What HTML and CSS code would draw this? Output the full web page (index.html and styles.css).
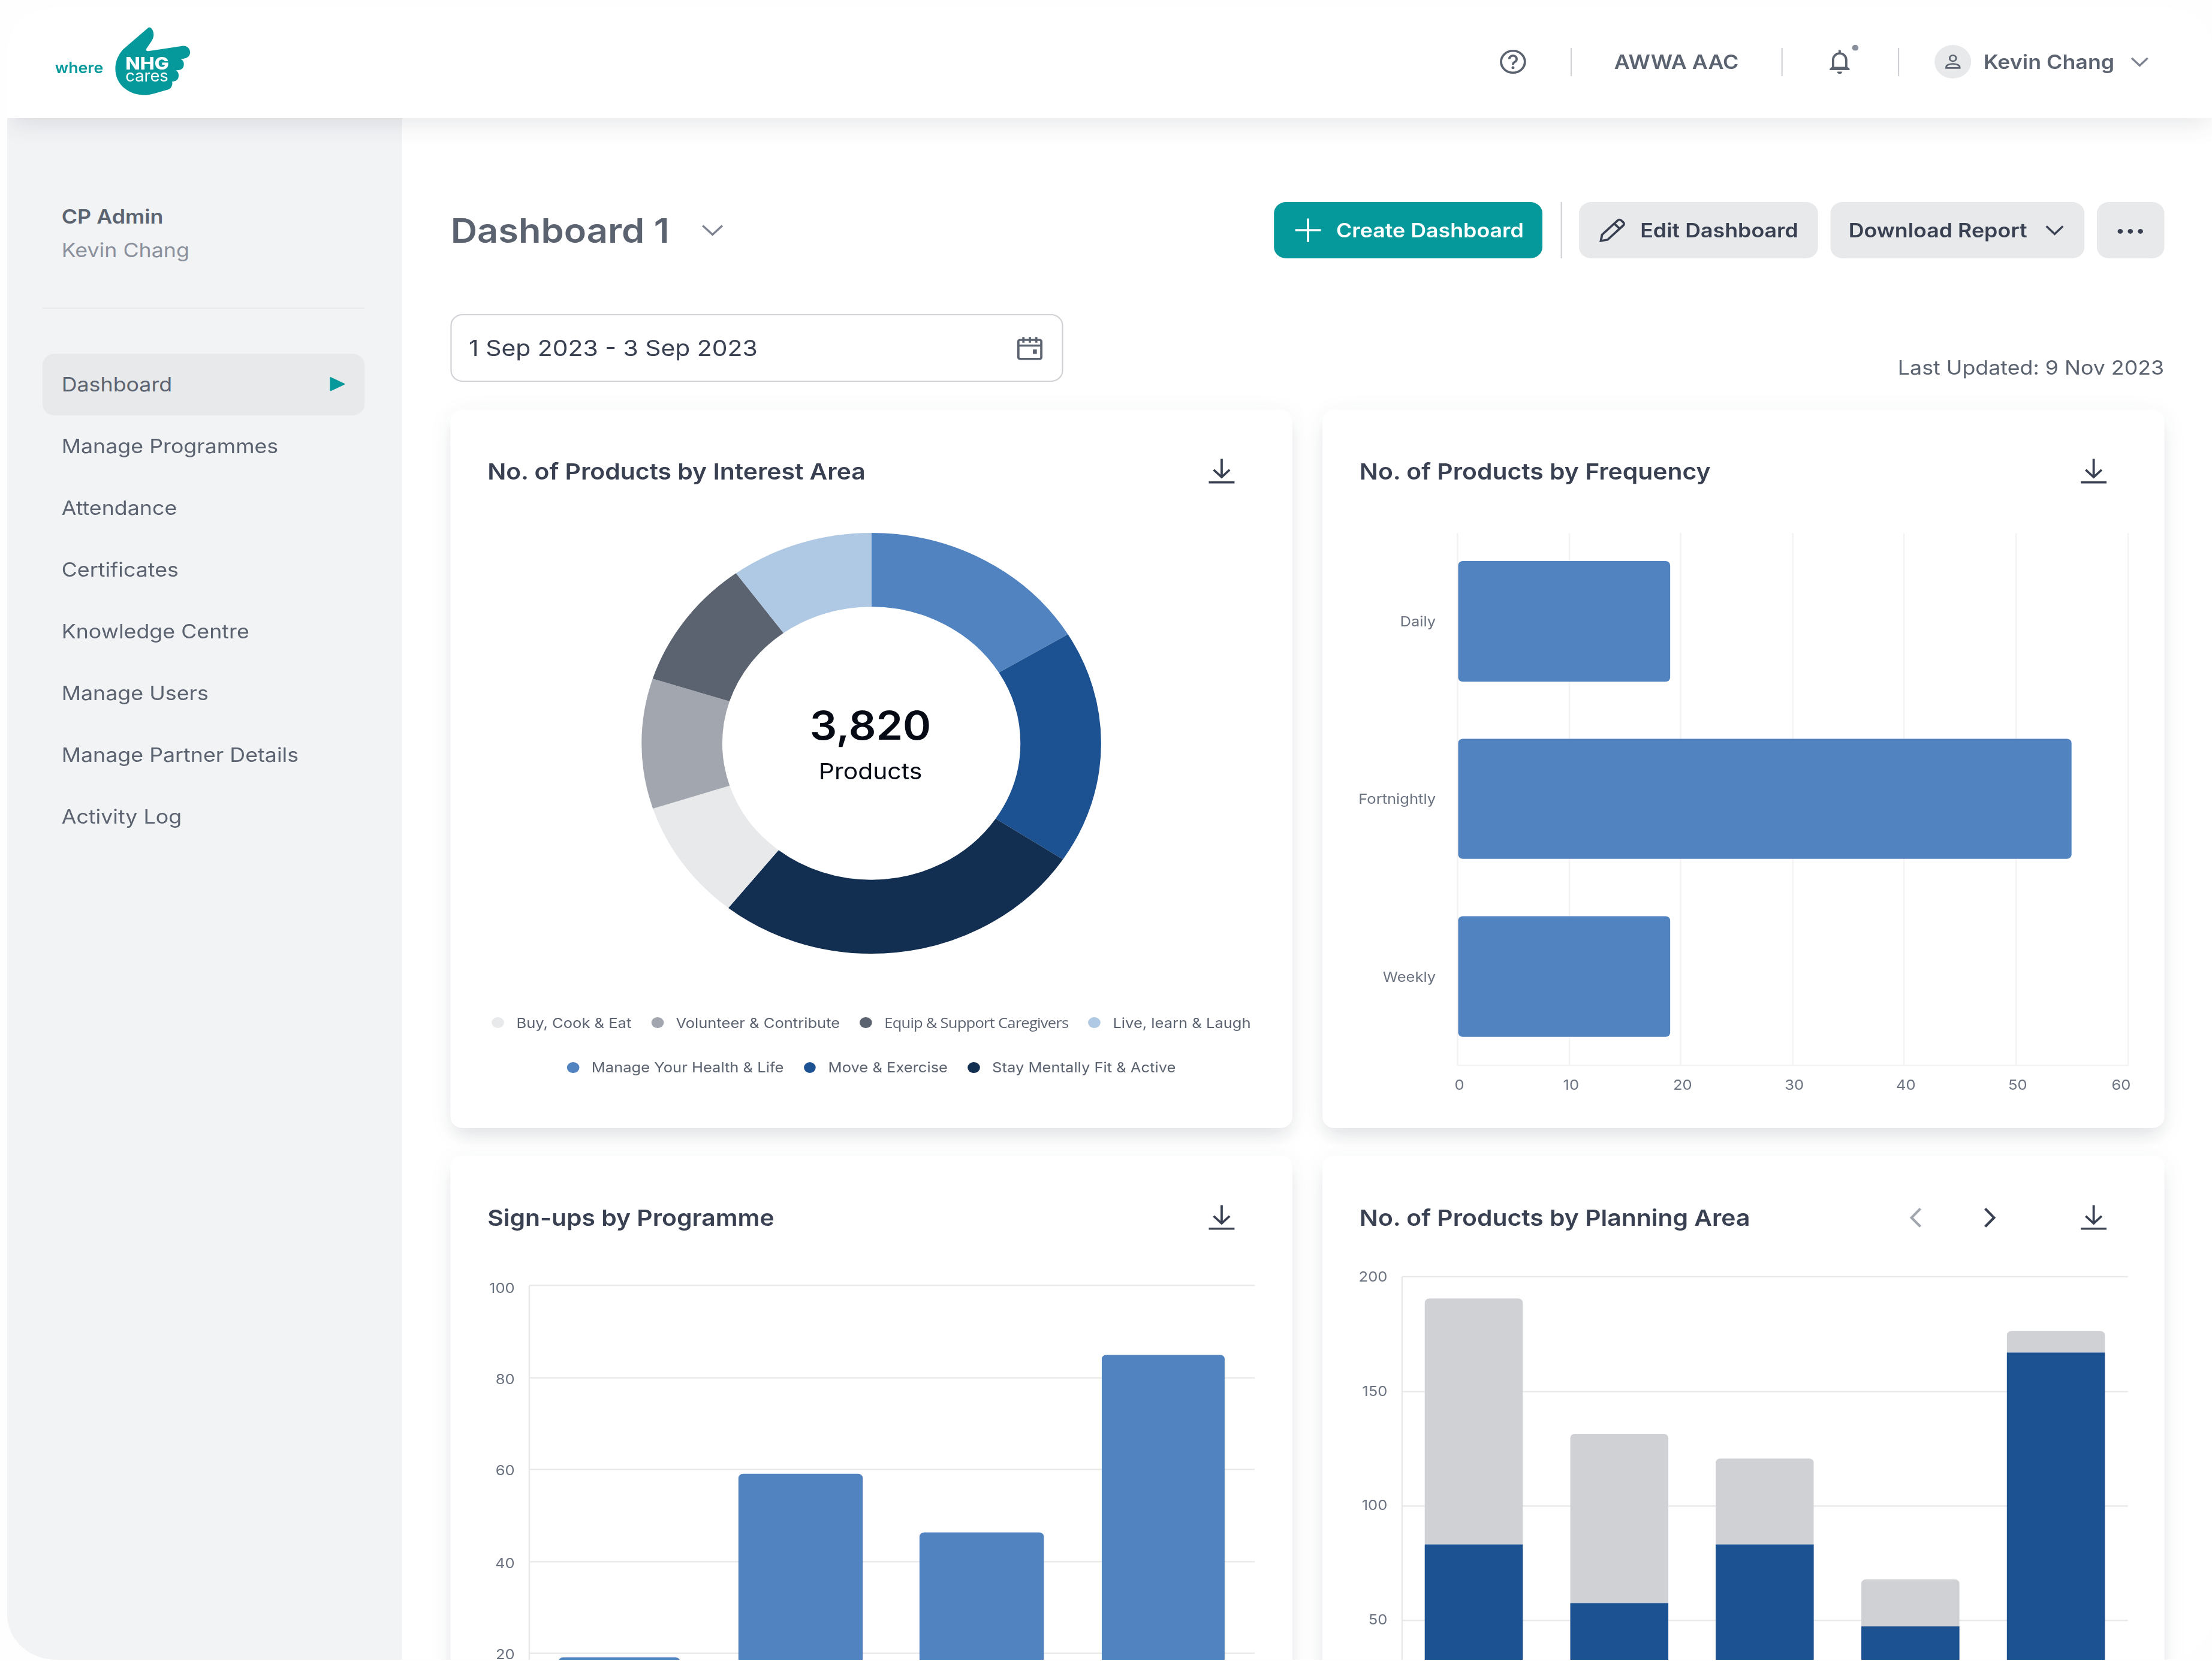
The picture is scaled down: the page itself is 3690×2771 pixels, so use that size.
FILE: index.html
```
<!DOCTYPE html>
<html lang="en">
<head>
    <meta charset="UTF-8">
    <meta name="viewport" content="width=device-width, initial-scale=1.0">
    <title>NHG Cares - Dashboard</title>
    <link rel="stylesheet" href="styles.css">
</head>
<body>
    <div class="app">
        <header class="topbar">
            <svg class="logo" viewBox="0 0 92 52">
                <path class="hand" d="M60.3 1.2 C61.2 -0.2 62.6 0.3 63.4 1.8 C65 5 64.6 8.2 63 11 L59.8 16.4 C59 18 60 18.8 61.5 18.4 L83 14.6 C86.2 14.2 88.3 16.6 88.2 19.8 C88 22.6 86.2 24 83.6 24.4 L82 24.6 C84 25.6 84.4 27.6 84 29.8 C83.6 32.4 81.6 33 79 33.2 C80.6 34.6 81 36.4 80.6 38.4 C80.2 40.8 78.6 41.6 76.3 41.8 C77 43.2 76.4 45 75.8 46.2 C75.3 47.2 74.5 47.6 73.4 48 L64.5 51 C58 53.2 51 52 46 47.5 C41.5 43.4 39.4 38 39.4 32 C39.4 26.6 41 22 44.3 17.4 Z" transform="translate(0 1.2) scale(1 .934)" />
                <text class="logo-where" x="0" y="34.2" textLength="31.5" lengthAdjust="spacingAndGlyphs">where</text>
                <text class="logo-nhg" x="46" y="31.7" textLength="28.4" lengthAdjust="spacingAndGlyphs">NHG</text>
                <text class="logo-cares" x="46" y="40.1" textLength="28" lengthAdjust="spacingAndGlyphs">cares</text>
            </svg>
            <div class="topbar-right">
                <svg class="icon icon-help" viewBox="0 0 24 24">
                    <circle cx="12" cy="12" r="7.8" />
                    <path d="M9.6 10 a2.4 2.4 0 1 1 3.6 2.1 c-.9 .5 -1.2 1 -1.2 2" />
                    <circle class="fill" cx="12" cy="16.2" r="1" />
                </svg>
                <span class="divider"></span>
                <span class="centre-name">AWWA AAC</span>
                <span class="divider"></span>
                <svg class="icon icon-bell" viewBox="0 0 24 24">
                    <path d="M7.7 17 V10.6 a4.3 4.6 0 0 1 8.6 0 V17 M12 3.7 V6" />
                    <path class="fill" d="M7 15.6 H17 L18.5 17 V18 H5.5 V17 Z" />
                    <path class="fill" d="M10.4 19 h3.2 a1.6 1.6 0 0 1 -3.2 0 z" />
                    <circle class="bell-dot" cx="22.2" cy="2" r="2.1" />
                </svg>
                <span class="divider"></span>
                <span class="avatar">
                    <svg viewBox="0 0 24 24">
                        <circle cx="12" cy="9.5" r="2.1" />
                        <path d="M7.6 16.4 V15.9 C7.6 12.6 16.4 12.6 16.4 15.9 V16.4 Z" />
                    </svg>
                </span>
                <span class="user-name">Kevin Chang</span>
                <svg class="chevron chevron-user" viewBox="0 0 14 8"><path d="M1.8 1.2 L7 6.6 L12.2 1.2" /></svg>
            </div>
        </header>

        <div class="layout">
            <aside class="sidebar">
                <div class="role">CP Admin</div>
                <div class="role-user">Kevin Chang</div>
                <nav class="nav">
                    <a class="nav-item active">Dashboard
                        <svg class="nav-arrow" viewBox="0 0 10 10"><path d="M0 .5 Q0 -.2 .7 .1 L9.6 4.7 Q10 5 9.6 5.3 L.7 9.9 Q0 10.2 0 9.5 Z" /></svg>
                    </a>
                    <a class="nav-item">Manage Programmes</a>
                    <a class="nav-item">Attendance</a>
                    <a class="nav-item">Certificates</a>
                    <a class="nav-item">Knowledge Centre</a>
                    <a class="nav-item">Manage Users</a>
                    <a class="nav-item">Manage Partner Details</a>
                    <a class="nav-item">Activity Log</a>
                </nav>
            </aside>

            <main class="main">
                <div class="title-row">
                    <h1>Dashboard 1</h1>
                    <svg class="chevron chevron-title" viewBox="0 0 14 8"><path d="M.6 .6 L7 7 L13.4 .6" /></svg>
                    <div class="actions">
                        <button class="btn btn-primary">
                            <svg class="icon" viewBox="0 0 24 24"><path d="M12 3.6 V20.4 M3.6 12 H20.4" /></svg>
                            Create Dashboard
                        </button>
                        <span class="divider tall"></span>
                        <button class="btn btn-edit">
                            <svg class="icon" viewBox="0 0 24 24"><path d="M4.4 19.6 L5.2 15.2 L15.4 5 a1.6 1.6 0 0 1 2.3 0 L19 6.3 a1.6 1.6 0 0 1 0 2.3 L8.8 18.8 Z M13.2 7.4 L16.6 10.8" /></svg>
                            Edit Dashboard
                        </button>
                        <button class="btn btn-download">
                            Download Report
                            <svg class="chevron" viewBox="0 0 14 8"><path d="M1.2 1 L6.6 6.6 L12 1" /></svg>
                        </button>
                        <button class="btn btn-more">
                            <svg class="icon" viewBox="0 0 24 24"><circle cx="5.4" cy="12.8" r="1.7" /><circle cx="12" cy="12.8" r="1.7" /><circle cx="18.6" cy="12.8" r="1.7" /></svg>
                        </button>
                    </div>
                </div>

                <div class="filter-row">
                    <div class="date-input">
                        <span>1 Sep 2023 - 3 Sep 2023</span>
                        <svg class="icon icon-calendar" viewBox="0 0 24 24">
                            <rect x="4.5" y="6" width="15" height="13.6" rx="1.2" />
                            <path d="M4.5 10 H19.5 M7.8 4 V8 M12 4 V8 M16.2 4 V8" />
                            <rect class="fill" x="14" y="12.8" width="2.6" height="3.2" />
                        </svg>
                    </div>
                    <span class="updated">Last Updated: 9 Nov 2023</span>
                </div>

                <div class="cards">
                    <section class="card">
                        <div class="card-head">
                            <h2>No. of Products by Interest Area</h2>
                            <svg class="icon" viewBox="0 0 24 24"><path d="M12 3.2 V16 M6.8 11 L12 16.2 L17.2 11 M3.6 20 H20.4" /></svg>
                        </div>
                        <svg class="donut" viewBox="0 0 300 300">
                            <g transform="rotate(-90 150 150)">
                                <circle class="s-manage" cx="150" cy="150" r="123.65" pathLength="360" stroke-dasharray="58.8 301.2" />
                                <circle class="s-move" cx="150" cy="150" r="123.65" pathLength="360" stroke-dasharray="64.7 295.3" stroke-dashoffset="-58.8" />
                                <circle class="s-stay" cx="150" cy="150" r="123.65" pathLength="360" stroke-dasharray="95 265" stroke-dashoffset="-123.5" />
                                <circle class="s-buy" cx="150" cy="150" r="123.65" pathLength="360" stroke-dasharray="33.4 326.6" stroke-dashoffset="-218.5" />
                                <circle class="s-volunteer" cx="150" cy="150" r="123.65" pathLength="360" stroke-dasharray="36 324" stroke-dashoffset="-251.9" />
                                <circle class="s-equip" cx="150" cy="150" r="123.65" pathLength="360" stroke-dasharray="36 324" stroke-dashoffset="-287.9" />
                                <circle class="s-live" cx="150" cy="150" r="123.65" pathLength="360" stroke-dasharray="36.1 323.9" stroke-dashoffset="-323.9" />
                            </g>
                            <text class="donut-total" x="149.4" y="147.5">3,820</text>
                            <text class="donut-label" x="149.4" y="175.5">Products</text>
                        </svg>
                        <div class="legend">
                            <div class="legend-row">
                                <span class="legend-item"><i class="dot d-buy"></i>Buy, Cook &amp; Eat</span>
                                <span class="legend-item"><i class="dot d-volunteer"></i>Volunteer &amp; Contribute</span>
                                <span class="legend-item alt"><i class="dot d-equip"></i>Equip &amp; Support Caregivers</span>
                                <span class="legend-item"><i class="dot d-live"></i>Live, learn &amp; Laugh</span>
                            </div>
                            <div class="legend-row">
                                <span class="legend-item"><i class="dot d-manage"></i>Manage Your Health &amp; Life</span>
                                <span class="legend-item"><i class="dot d-move"></i>Move &amp; Exercise</span>
                                <span class="legend-item"><i class="dot d-stay"></i>Stay Mentally Fit &amp; Active</span>
                            </div>
                        </div>
                    </section>

                    <section class="card">
                        <div class="card-head">
                            <h2>No. of Products by Frequency</h2>
                            <svg class="icon" viewBox="0 0 24 24"><path d="M12 3.2 V16 M6.8 11 L12 16.2 L17.2 11 M3.6 20 H20.4" /></svg>
                        </div>
                        <svg class="chart" viewBox="0 56 549.25 456">
                            <path class="grid light" d="M88.2 87.8 V467.3 M161.2 87.8 V467.3 M233.8 87.8 V467.3 M307 87.8 V467.3 M379.6 87.8 V467.3 M452.8 87.8 V467.3 M526 87.8 V467.3 M88.2 467.3 H526" />
                            <!-- Bars -->
                            <rect class="bar" x="88.6" y="107.7" width="138.4" height="86" rx="3" />
                            <rect class="bar" x="88.6" y="234.4" width="400.4" height="85.6" rx="3" />
                            <rect class="bar" x="88.6" y="360.9" width="138.4" height="86" rx="3" />
                            <!-- Axis labels -->
                            <g class="end">
                                <text x="74" y="154.4">Daily</text>
                                <text x="74" y="280.8">Fortnightly</text>
                                <text x="74" y="407.6">Weekly</text>
                            </g>
                            <g class="mid">
                                <text x="89.4" y="484.6">0</text>
                                <text x="162.3" y="484.6">10</text>
                                <text x="235.1" y="484.6">20</text>
                                <text x="308" y="484.6">30</text>
                                <text x="380.9" y="484.6">40</text>
                                <text x="453.8" y="484.6">50</text>
                                <text x="521.4" y="484.6">60</text>
                            </g>
                        </svg>
                    </section>

                    <section class="card">
                        <div class="card-head">
                            <h2>Sign-ups by Programme</h2>
                            <svg class="icon" viewBox="0 0 24 24"><path d="M12 3.2 V16 M6.8 11 L12 16.2 L17.2 11 M3.6 20 H20.4" /></svg>
                        </div>
                        <svg class="chart" viewBox="0 56 549.25 456">
                            <path class="grid" d="M51.5 92.5 H525 M51.5 158.4 H525 M51.5 223.7 H525 M51.5 289.5 H525 M51.5 354.7 H525 M51.5 92.5 V420" />
                            <rect class="bar" x="70.5" y="357.7" width="79.5" height="80" rx="3" />
                            <rect class="bar" x="188" y="226.8" width="81.2" height="200" rx="3" />
                            <rect class="bar" x="306.2" y="268.6" width="81.2" height="180" rx="3" />
                            <rect class="bar" x="425.2" y="142" width="80.2" height="300" rx="3" />
                            <g class="end">
                                <text x="42" y="97.7">100</text>
                                <text x="42" y="162.9">80</text>
                                <text x="42" y="228">60</text>
                                <text x="42" y="293.9">40</text>
                                <text x="42" y="359.1">20</text>
                            </g>
                        </svg>
                    </section>

                    <section class="card">
                        <div class="card-head">
                            <h2>No. of Products by Planning Area</h2>
                            <svg class="pager prev" viewBox="0 0 8 14"><path d="M7 .6 L1.2 7 L7 13.4" /></svg>
                            <svg class="pager next" viewBox="0 0 8 14"><path d="M1 .6 L6.8 7 L1 13.4" /></svg>
                            <svg class="icon" viewBox="0 0 24 24"><path d="M12 3.2 V16 M6.8 11 L12 16.2 L17.2 11 M3.6 20 H20.4" /></svg>
                        </div>
                        <svg class="chart" viewBox="0 56 549.25 456">
                            <path class="grid" d="M52 86.3 H525.8 M52 168.2 H525.8 M52 249.8 H525.8 M52 331.4 H525.8 M52 86.3 V420" />
                            <!-- Total -->
                            <rect class="bar-rest" x="66.8" y="101.8" width="64" height="300" rx="3" />
                            <rect class="bar-rest" x="161.8" y="198.3" width="64" height="200" rx="3" />
                            <rect class="bar-rest" x="256.7" y="215.9" width="64" height="200" rx="3" />
                            <rect class="bar-rest" x="351.8" y="302" width="64" height="100" rx="3" />
                            <rect class="bar-rest" x="446.8" y="125" width="64" height="300" rx="3" />
                            <!-- Active -->
                            <rect class="bar-active" x="66.8" y="277.2" width="64" height="140" />
                            <rect class="bar-active" x="161.8" y="319" width="64" height="100" />
                            <rect class="bar-active" x="256.7" y="277.2" width="64" height="140" />
                            <rect class="bar-active" x="351.8" y="335.6" width="64" height="80" />
                            <rect class="bar-active" x="446.8" y="140.4" width="64" height="280" />
                            <g class="end">
                                <text x="42.4" y="89.8">200</text>
                                <text x="42.4" y="171.2">150</text>
                                <text x="42.4" y="252.6">100</text>
                                <text x="42.4" y="334">50</text>
                            </g>
                        </svg>
                    </section>
                </div>
            </main>
        </div>
    </div>
</body>
</html>
```
FILE: styles.css
```
/* 1rem = 10 layout units */
html {
    font-size: 23.4px;
}

body {
    margin: 0;
    height: 2771px;
    overflow: hidden;
    background: #fefefe;
    font-family: Inter, "Liberation Sans", sans-serif;
    color: #384051;
}

.app {
    margin: 12px 0 0 12px;
    width: 144rem;
    height: 117.8rem;
    box-sizing: border-box;
    display: flex;
    flex-direction: column;
    background: white;
    border-radius: 3.2rem;
    overflow: hidden;
    transform: scaleX(1.0921);
    transform-origin: 0 0;
    font-size: 1.4rem;
}

svg {
    display: block;
    flex: none;
    overflow: visible;
}

.icon {
    width: 2.4rem;
    height: 2.4rem;
    fill: none;
    stroke: currentColor;
    stroke-width: 1.5;
}

.icon .fill {
    fill: currentColor;
    stroke: none;
}

.chevron {
    width: 1.4rem;
    height: 0.8rem;
    fill: none;
    stroke: currentColor;
    stroke-width: 1.4;
}

.divider {
    width: 0.1rem;
    height: 2rem;
    background: #d0d1d5;
}

.divider.tall {
    height: 4rem;
    margin: 0 1.1rem 0 1.2rem;
}

/* Top bar */
.topbar {
    position: relative;
    z-index: 1;
    flex: none;
    height: 7.9rem;
    box-sizing: border-box;
    padding: 0 4.1rem 0.1rem 3.1rem;
    display: flex;
    align-items: center;
    justify-content: space-between;
    background: white;
    box-shadow: 0 0.6rem 1.6rem -0.3rem rgba(56, 64, 81, 0.14);
}

.logo {
    width: 9.2rem;
    height: 5.2rem;
}

.hand {
    fill: #05999b;
}

.logo-where {
    font-size: 11px;
    font-weight: 600;
    fill: #05999b;
}

.logo-nhg {
    font-size: 12px;
    font-weight: 800;
    fill: white;
}

.logo-cares {
    font-size: 11.5px;
    fill: white;
}

.topbar-right {
    display: flex;
    align-items: center;
    color: #5c6370;
    font-weight: 600;
}

.icon-help {
    margin-right: 2.55rem;
}

.centre-name {
    width: 8rem;
    margin: 0 2.9rem 0 2.75rem;
    white-space: nowrap;
}

.icon-bell {
    margin: 0 2.6rem 0 2.5rem;
}

.bell-dot {
    fill: #8a909c;
    stroke: none;
}

.avatar {
    width: 2.4rem;
    height: 2.4rem;
    margin: 0 0.8rem 0 2.3rem;
    border-radius: 50%;
    background: #e8e9eb;
}

.avatar svg {
    width: 2.4rem;
    height: 2.4rem;
    fill: none;
    stroke: #5c6370;
    stroke-width: 1.1;
}

.user-name {
    width: 8.5rem;
    white-space: nowrap;
}

.chevron-user {
    margin-left: 1rem;
    color: #7d8390;
}

/* Sidebar */
.layout {
    flex: 1;
    min-height: 0;
    display: flex;
}

.sidebar {
    flex: none;
    width: 25.75rem;
    box-sizing: border-box;
    padding: 5.8rem 2.4rem 0 2.3rem;
    background: #f2f3f5;
    color: #5c6370;
}

.role,
.role-user {
    padding-left: 1.25rem;
    line-height: 2.4rem;
}

.role {
    font-weight: 600;
}

.role-user {
    color: #8a909c;
}

.nav {
    margin-top: 2.9rem;
    padding-top: 3.2rem;
    border-top: 0.1rem solid #e8e9eb;
}

.nav-item {
    height: 4.4rem;
    padding: 0 1.3rem 0 1.25rem;
    display: flex;
    align-items: center;
    justify-content: space-between;
    border-radius: 0.8rem;
}

.nav-item.active {
    background: #e8e9eb;
}

.nav-arrow {
    width: 1rem;
    height: 1rem;
    fill: #05999b;
}

/* Main */
.main {
    flex: 1;
    min-width: 0;
    padding: 6rem 3.2rem 0;
}

.title-row {
    display: flex;
    align-items: center;
    height: 4rem;
}

h1 {
    margin: 0;
    padding-top: 0.1rem;
    font-size: 2.4rem;
    font-weight: 600;
    color: #5c6370;
    width: 14.2rem;
    white-space: nowrap;
}

.chevron-title {
    margin-left: 2.2rem;
    color: #7d8390;
}

.actions {
    margin-left: auto;
    display: flex;
}

.btn {
    height: 4rem;
    padding: 0 1.2rem;
    display: flex;
    align-items: center;
    box-sizing: border-box;
    border: 0;
    border-radius: 0.8rem;
    background: #e8e9eb;
    color: #384051;
    font-family: inherit;
    font-size: 1.4rem;
    font-weight: 600;
    white-space: nowrap;
}

.btn-primary {
    width: 17.5rem;
    padding-left: 1rem;
    gap: 0.65rem;
    background: #05999b;
    color: white;
}

.btn-edit {
    width: 15.6rem;
    padding-left: 1rem;
    gap: 0.6rem;
}

.btn-download {
    width: 16.6rem;
    margin: 0 0.8rem;
    justify-content: space-between;
}

.btn-more {
    width: 4.4rem;
    padding: 0 1rem;
}

.btn-more .icon {
    fill: #384051;
    stroke: none;
}

.filter-row {
    margin-top: 4rem;
    display: flex;
    align-items: flex-end;
    justify-content: space-between;
}

.date-input {
    width: 40rem;
    height: 4.8rem;
    box-sizing: border-box;
    padding: 0 0.9rem 0 1.1rem;
    display: flex;
    align-items: center;
    justify-content: space-between;
    border: 0.1rem solid #d0d1d5;
    border-radius: 0.8rem;
    font-size: 1.6rem;
}

.icon-calendar {
    color: #5c6370;
}

.updated {
    line-height: 2rem;
    color: #5c6370;
}

/* Cards */
.cards {
    margin-top: 2rem;
    display: grid;
    grid-template-columns: 1fr 1fr;
    gap: 2rem;
}

.card {
    height: 51.2rem;
    background: white;
    border-radius: 0.8rem;
    box-shadow: 0 0.3rem 1.8rem rgba(56, 64, 81, 0.06),
                0 0.7rem 1.2rem -0.3rem rgba(56, 64, 81, 0.12);
}

.card-head {
    display: flex;
    align-items: center;
    padding: 3.2rem 3.4rem 0 2.4rem;
    height: 2.4rem;
}

.card-head h2 {
    flex: 1;
    margin: 0;
    font-size: 1.6rem;
    font-weight: 600;
}

.pager {
    width: 0.8rem;
    height: 1.4rem;
    fill: none;
    stroke: currentColor;
    stroke-width: 1.7;
}

.pager.prev {
    color: #a2a6ae;
    margin-right: 4rem;
}

.pager.next {
    margin-right: 5.2rem;
}

.chart {
    width: 100%;
    height: 45.6rem;
}

.chart text {
    font-size: 10px;
    fill: #6b7280;
}

.end {
    text-anchor: end;
}

.mid {
    text-anchor: middle;
}

.grid {
    fill: none;
    stroke: #e8e9eb;
}

.grid.light {
    stroke: #f2f3f5;
}

.bar {
    fill: #5083c0;
}

.bar-rest {
    fill: #d0d1d5;
}

.bar-active {
    fill: #1d5292;
}

/* Donut */
.donut {
    width: 30rem;
    height: 30rem;
    margin: 3.2rem auto 0;
}

.donut circle {
    fill: none;
    stroke-width: 52.7;
}

.donut text {
    text-anchor: middle;
    fill: #050a14;
}

.donut-total {
    font-size: 28px;
    font-weight: 600;
}

.donut-label {
    font-size: 16px;
}

.s-manage { stroke: #5083c0; }
.s-move { stroke: #1d5292; }
.s-stay { stroke: #122e51; }
.s-buy { stroke: #e8e9eb; }
.s-volunteer { stroke: #a2a6ae; }
.s-equip { stroke: #5c6370; }
.s-live { stroke: #afc8e3; }

.legend {
    margin-top: 3.3rem;
    font-size: 1rem;
    color: #5c6370;
}

.legend-row {
    display: flex;
    justify-content: center;
    gap: 1.3rem;
    height: 3.2rem;
    align-items: center;
}

.legend-item {
    display: flex;
    align-items: center;
    gap: 0.8rem;
    white-space: nowrap;
}

.legend-item.alt {
    font-family: "Open Sans", "Noto Sans", sans-serif;
    letter-spacing: -0.03em;
}

.dot {
    width: 0.8rem;
    height: 0.8rem;
    border-radius: 50%;
}

.d-manage { background: #5083c0; }
.d-move { background: #1d5292; }
.d-stay { background: #122e51; }
.d-buy { background: #e8e9eb; }
.d-volunteer { background: #a2a6ae; }
.d-equip { background: #5c6370; }
.d-live { background: #afc8e3; }
```
